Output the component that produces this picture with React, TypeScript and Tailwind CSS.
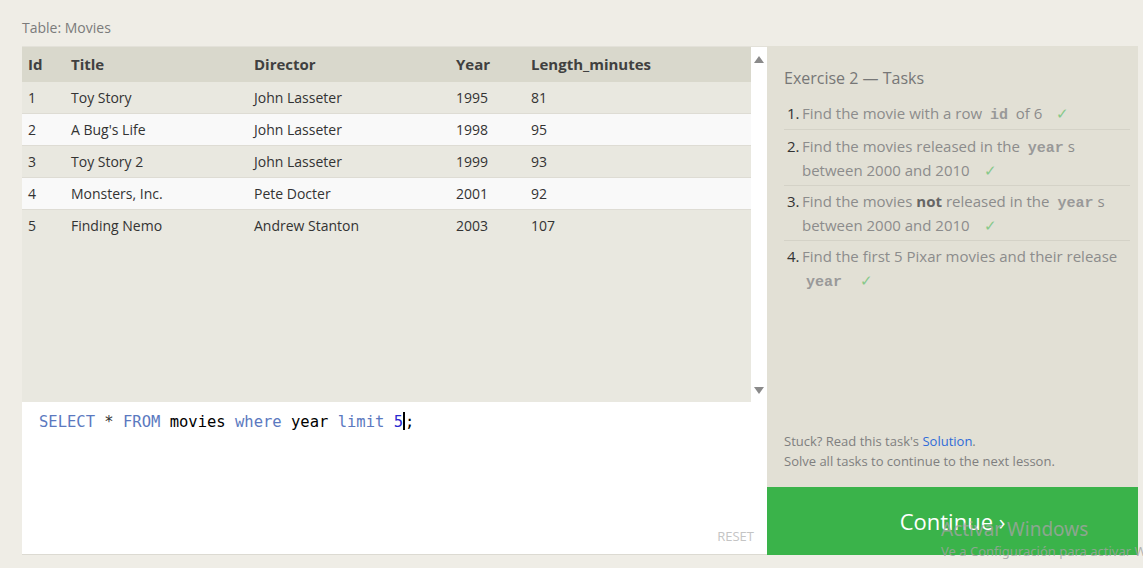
const movies = [
  { id: 1, title: "Toy Story", director: "John Lasseter", year: 1995, len: 81 },
  { id: 2, title: "A Bug's Life", director: "John Lasseter", year: 1998, len: 95 },
  { id: 3, title: "Toy Story 2", director: "John Lasseter", year: 1999, len: 93 },
  { id: 4, title: "Monsters, Inc.", director: "Pete Docter", year: 2001, len: 92 },
  { id: 5, title: "Finding Nemo", director: "Andrew Stanton", year: 2003, len: 107 },
]

function Check() {
  return <span className="ml-[10px] text-[#86c98a]">✓</span>
}

function Code({ children }: { children: React.ReactNode }) {
  return (
    <code className="px-[4px] font-bold text-[15px] leading-none text-[#999] font-['Liberation_Mono',monospace]">{children}</code>
  )
}

export default function App() {
  return (
    <div className="relative w-[1143px] h-[568px] overflow-hidden bg-[#efede6] font-['Open_Sans',sans-serif]">
      <div className="pt-[17px] pl-[22px] text-[14px] text-[#7b7b7b] h-[46px]">Table: Movies</div>

      <div className="flex ml-[22px] w-[1116px] h-[509px]">
        {/* Left: table + editor */}
        <div className="w-[745px] flex flex-col border-b border-[#dcdad2]">
          <div className="flex h-[356px] border-t border-[#e3e1d9]">
            <div className="flex-1 bg-[#e9e8e0]">
              <div className="flex h-[35px] items-center bg-[#d9d8cc] text-[15px] font-bold text-[#404040]">
                <div className="w-[49px] pl-[6px]">Id</div>
                <div className="w-[183px]">Title</div>
                <div className="w-[202px]">Director</div>
                <div className="w-[75px]">Year</div>
                <div>Length_minutes</div>
              </div>
              {movies.map((m, i) => (
                <div
                  key={m.id}
                  className={`flex items-center text-[14px] text-[#333] ${i < movies.length - 1 ? "h-[32px] border-b border-[#dedcd4]" : "h-[31px]"} ${i % 2 === 1 ? "bg-[#f9f9f9]" : "bg-[#e9e8e0]"}`}
                >
                  <div className="w-[49px] pl-[6px]">{m.id}</div>
                  <div className="w-[183px]">{m.title}</div>
                  <div className="w-[202px]">{m.director}</div>
                  <div className="w-[75px]">{m.year}</div>
                  <div>{m.len}</div>
                </div>
              ))}
            </div>
            <div className="w-[16px] bg-white flex flex-col justify-between items-center pt-[9px] pb-[8px]">
              <svg width="10" height="7" viewBox="0 0 10 7"><path d="M5 0 L10 7 L0 7 Z" fill="#8a8a8a" /></svg>
              <svg width="10" height="7" viewBox="0 0 10 7"><path d="M0 0 L10 0 L5 7 Z" fill="#8a8a8a" /></svg>
            </div>
          </div>
          <div className="flex-1 bg-white relative">
            <div className="pt-[9px] pl-[17px] text-[15.5px] leading-[22px] font-['DejaVu_Sans_Mono',monospace] whitespace-pre">
              <span className="text-[#5b79c0]">SELECT</span>
              <span className="text-[#333]"> * </span>
              <span className="text-[#5b79c0]">FROM</span>
              <span className="text-black"> movies </span>
              <span className="text-[#5b79c0]">where</span>
              <span className="text-black"> year </span>
              <span className="text-[#5b79c0]">limit</span>
              <span> </span>
              <span className="text-[#2a2ad0]">5</span>
              <span className="inline-block w-[2px] h-[18px] bg-black align-[-3px]" />
              <span className="text-black">;</span>
            </div>
            <div className="absolute right-[13px] bottom-[8px] text-[13px] text-[#c4c4c4]">RESET</div>
          </div>
        </div>

        {/* Right: tasks */}
        <div className="w-[371px] flex flex-col">
          <div className="flex-1 bg-[#e2e0d5] pl-[17px] pr-[8px] pt-[21px] flex flex-col">
            <div className="text-[16px] text-[#777] leading-[22px]">Exercise 2 — Tasks</div>
            <ol className="mt-[12px] text-[15px] leading-[24px] text-[#8c8c8c]">
              <li className="flex pb-[4px] border-b border-[#d4d2c7]">
                <span className="w-[18px] pl-[3px] text-[#333] shrink-0">1.</span>
                <span>Find the movie with a row <Code>id</Code> of 6 <Check /></span>
              </li>
              <li className="flex pt-[4px] pb-[3px] border-b border-[#d4d2c7]">
                <span className="w-[18px] pl-[3px] text-[#333] shrink-0">2.</span>
                <span>Find the movies released in the <Code>year</Code>s between 2000 and 2010 <Check /></span>
              </li>
              <li className="flex pt-[3px] pb-[3px] border-b border-[#d4d2c7]">
                <span className="w-[18px] pl-[3px] text-[#333] shrink-0">3.</span>
                <span>Find the movies <b className="text-[#666]">not</b> released in the <Code>year</Code>s between 2000 and 2010 <Check /></span>
              </li>
              <li className="flex pt-[3px]">
                <span className="w-[18px] pl-[3px] text-[#333] shrink-0">4.</span>
                <span>Find the first 5 Pixar movies and their release <Code>year</Code> <Check /></span>
              </li>
            </ol>
            <div className="mt-auto pb-[16px] text-[13px] leading-[20px] text-[#7f7f7f]">
              <div>Stuck? Read this task's <span className="text-[#2f6bd8]">Solution</span>.</div>
              <div>Solve all tasks to continue to the next lesson.</div>
            </div>
          </div>
          <div className="h-[68px] bg-[#3ab34a] flex items-center justify-center text-white text-[22px]">
            Continue ›
          </div>
        </div>
      </div>

      {/* Windows activation watermark overlay */}
      <div className="absolute left-[941px] top-[517px] text-[#a3a3a3]/80 font-['Noto_Sans',sans-serif] whitespace-nowrap pointer-events-none">
        <div className="text-[19px] leading-[25px]">Activar Windows</div>
        <div className="text-[13px] leading-[18px]">Ve a Configuración para activar Windows.</div>
      </div>
    </div>
  )
}
